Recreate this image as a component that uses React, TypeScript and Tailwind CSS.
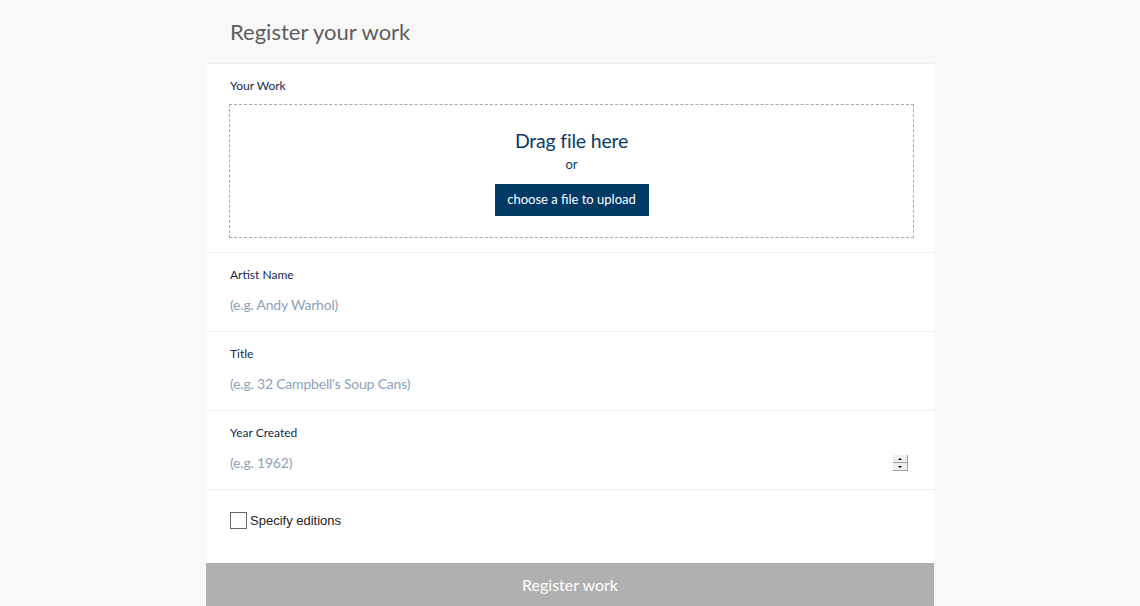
import React from 'react';

const font = { fontFamily: 'Lato, "Open Sans", sans-serif' };

function Field({ label, placeholder, spinner }: { label: string; placeholder: string; spinner?: boolean }) {
  return (
    <div className="h-[79px] border-b border-[#efefef] pl-6 pr-[26px] pt-[14px]">
      <div className="text-[12px] leading-4 text-[#13294b]">{label}</div>
      <div className="mt-3 flex h-5 items-center justify-between">
        <span className="text-[14px] leading-5 tracking-[-0.2px] text-[#8ba2b9]">{placeholder}</span>
        {spinner && (
          <div className="flex h-4 w-[15px] flex-col">
            <div className="flex h-2 items-center justify-center border-r border-b border-[#a0a0a0] bg-[#efefef]">
              <div className="h-0 w-0 border-x-[2px] border-b-[2px] border-x-transparent border-b-black" />
            </div>
            <div className="flex h-2 items-center justify-center border-r border-b border-[#a0a0a0] bg-[#efefef]">
              <div className="h-0 w-0 border-x-[2px] border-t-[2px] border-x-transparent border-t-black" />
            </div>
          </div>
        )}
      </div>
    </div>
  );
}

export default function App() {
  return (
    <div className="min-h-screen bg-[#f8f8f8]" style={font}>
      <div className="mx-auto w-[728px]">
        <div className="flex h-[63px] items-center pl-6">
          <h1 className="text-[22px] text-[#5e5e5e]">Register your work</h1>
        </div>
        <div className="border-t border-[#efefef] bg-white">
          <div className="border-b border-[#efefef] pt-[14px] pb-[14px]">
            <div className="pl-6 text-[12px] leading-4 text-[#13294b]">Your Work</div>
            <div className="ml-[23px] mr-[20px] mt-[10px] flex h-[134px] flex-col items-center border border-dashed border-[#a9a9a9] pt-[22px]">
              <div className="text-[19.5px] leading-7 tracking-[-0.2px] text-[#0c3a66]">Drag file here</div>
              <div className="mt-px text-[13px] leading-4 text-[#0c3a66]">or</div>
              <button className="mt-3 h-8 w-[154px] bg-[#023a66] text-[13px] text-white">choose a file to upload</button>
            </div>
          </div>
          <Field label="Artist Name" placeholder="(e.g. Andy Warhol)" />
          <Field label="Title" placeholder="(e.g. 32 Campbell's Soup Cans)" />
          <Field label="Year Created" placeholder="(e.g. 1962)" spinner />
          <div className="flex h-[73px] items-start pl-6 pt-[21px]">
            <label className="flex items-center gap-[3px]">
              <span className="h-[17px] w-[17px] border border-[#666] bg-white" />
              <span className="text-[13px] text-[#222]" style={{ fontFamily: '"Liberation Sans", Arial, sans-serif' }}>Specify editions</span>
            </label>
          </div>
          <button className="flex h-[43px] w-full items-center justify-center bg-[#afb0af] text-[16px] text-white">Register work</button>
        </div>
      </div>
    </div>
  );
}
